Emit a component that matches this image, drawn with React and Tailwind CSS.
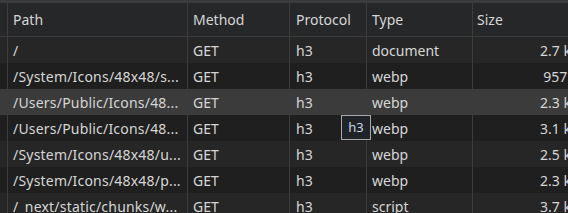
const rows = [
  { path: "/", method: "GET", protocol: "h3", type: "document", size: "2.7 kB" },
  { path: "/System/Icons/48x48/s...", method: "GET", protocol: "h3", type: "webp", size: "957 B" },
  { path: "/Users/Public/Icons/48...", method: "GET", protocol: "h3", type: "webp", size: "2.3 kB", selected: true },
  { path: "/Users/Public/Icons/48...", method: "GET", protocol: "h3", type: "webp", size: "3.1 kB", tip: true },
  { path: "/System/Icons/48x48/u...", method: "GET", protocol: "h3", type: "webp", size: "2.5 kB" },
  { path: "/System/Icons/48x48/p...", method: "GET", protocol: "h3", type: "webp", size: "2.3 kB" },
  { path: "/_next/static/chunks/w...", method: "GET", protocol: "h3", type: "script", size: "3.7 kB" },
];

const cols = "grid grid-cols-[8px_180px_102px_77px_106px_113px]";

const App = () => {
  return (
    <div className="w-[568px] h-[213px] overflow-hidden bg-[#1e1e1e] text-[14px] text-[#d6d6d6] font-['Noto_Sans',sans-serif]">
      <div className="w-[586px]">
        <div className="h-[3px] bg-[#3b3b3b]" />
        {/* header */}
        <div className={`${cols} h-[34px] bg-[#262729] border-b border-[#3c3c3c]`}>
          <div className="border-r border-[#3c3c3c]" />
          <div className="flex items-center px-[5px] border-r border-[#3c3c3c]">Path</div>
          <div className="flex items-center px-[5px] border-r border-[#3c3c3c]">Method</div>
          <div className="flex items-center px-[6px] border-r border-[#3c3c3c]">Protocol</div>
          <div className="flex items-center px-[5px] border-r border-[#3c3c3c]">Type</div>
          <div className="flex items-center px-[4px]">Size</div>
        </div>
        {rows.map((r, i) => (
          <div
            key={i}
            className={`${cols} h-[26px] ${
              r.selected ? "bg-[#3b3b3b]" : i % 2 === 0 ? "bg-[#262626]" : "bg-[#1f1f1f]"
            }`}
          >
            <div className="border-r border-[#3c3c3c]" />
            <div className="flex items-center px-[5px] border-r border-[#3c3c3c] whitespace-nowrap overflow-hidden tracking-[0.2px]">{r.path}</div>
            <div className="flex items-center px-[5px] border-r border-[#3c3c3c]">{r.method}</div>
            <div className="relative flex items-center px-[6px] border-r border-[#3c3c3c]">
              {r.protocol}
              {r.tip && (
                <div className="absolute left-[51px] top-0 w-[30px] h-[25px] z-10 flex items-center justify-center bg-[#202327] border border-[#a9a9a9] text-[#c9d6e8] text-[13px]">
                  h3
                </div>
              )}
            </div>
            <div className="flex items-center px-[5px] border-r border-[#3c3c3c]">{r.type}</div>
            <div className="flex items-center justify-end px-[6px] whitespace-nowrap">{r.size}</div>
          </div>
        ))}
      </div>
    </div>
  );
};

export default App;
